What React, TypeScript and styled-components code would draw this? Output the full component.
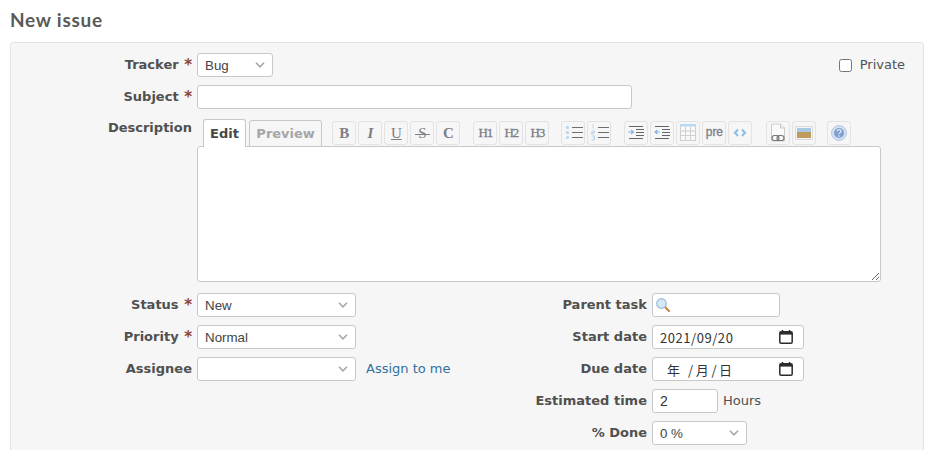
import { ReactNode } from 'react';
import styled, { createGlobalStyle } from 'styled-components';

const GlobalStyle = createGlobalStyle`
    html, body {
        margin: 0;
        padding: 0;
        background: #fff;
        overflow: hidden;
    }
    body {
        font-family: "DejaVu Sans", Verdana, sans-serif;
        font-size: 13px;
        color: #505050;
    }
`

const Page = styled.div`
    width: 930px;
    height: 450px;
    overflow: hidden;
`

const Title = styled.h2`
    margin: 0;
    padding: 9px 0 0 10px;
    height: 42px;
    box-sizing: border-box;
    font-family: "Lato", sans-serif;
    font-size: 19px;
    line-height: 21px;
    font-weight: 700;
    letter-spacing: 0.75px;
    color: #5a5a5a;
`

const Panel = styled.div`
    margin: 0 6px 0 10px;
    padding: 10px 18px 20px 0;
    background: #f6f6f6;
    border: 1px solid #e4e4e4;
    border-radius: 3px;
    display: flex;
    flex-direction: column;
    gap: 8px;
`

const Row = styled.div`
    display: flex;
    align-items: center;
    height: 24px;
`

const Label = styled.label<{ $width: number }>`
    width: ${p => p.$width}px;
    margin-right: 5px;
    flex: none;
    text-align: right;
    font-weight: 700;
    font-size: 13px;
    line-height: 16px;
    white-space: nowrap;
`

const Required = styled.span`
    color: #8a4435;
    font-size: 15px;
    line-height: 10px;
    margin-left: 1px;
    vertical-align: -1px;
`

const inputBox = `
    box-sizing: border-box;
    height: 24px;
    border: 1px solid #c8c8c8;
    border-radius: 3px;
    background: #fff;
    outline: none;
`

const TextInput = styled.input<{ $width: number }>`
    ${inputBox}
    width: ${p => p.$width}px;
    padding: 0 7px;
    font-family: "Liberation Sans", Arial, sans-serif;
    font-size: 14px;
    color: #333;
`

const SelectWrap = styled.div<{ $width: number }>`
    position: relative;
    width: ${p => p.$width}px;
    height: 24px;
    flex: none;
    svg {
        position: absolute;
        right: 8px;
        top: 9px;
        pointer-events: none;
    }
`

const Select = styled.select`
    ${inputBox}
    appearance: none;
    width: 100%;
    padding: 0 7px;
    font-family: "Liberation Sans", Arial, sans-serif;
    font-size: 13.33px;
    color: #444;
`

const Spread = styled.div`
    flex: 1;
`

const CheckLabel = styled.label`
    display: flex;
    align-items: center;
    gap: 8px;
    line-height: 14px;
    padding-bottom: 1px;
    input {
        margin: 1px 0 0;
        width: 13px;
        height: 13px;
    }
`

const DescriptionRow = styled.div`
    display: flex;
    align-items: flex-start;
    padding-top: 3px;
`

const DescriptionLabel = styled(Label)`
    padding: 0;
    line-height: 16px;
`

const Editor = styled.div`
    width: 684px;
    display: flex;
    flex-direction: column;
`

const EditorHead = styled.div`
    display: flex;
    align-items: flex-end;
    height: 27px;
    padding-left: 6px;
    position: relative;
    z-index: 1;
    margin-bottom: -1px;
`

const Tab = styled.div<{ $active?: boolean }>`
    box-sizing: border-box;
    height: ${p => (p.$active ? 28 : 27)}px;
    padding: 0 ${p => (p.$active ? 6 : 6.5)}px;
    margin-right: 3px;
    display: flex;
    align-items: center;
    font-weight: 700;
    font-size: 13px;
    border: 1px solid #c8c8c8;
    border-bottom: ${p => (p.$active ? '0' : '1px solid #c8c8c8')};
    border-radius: 3px 3px 0 0;
    background: ${p => (p.$active ? '#fff' : '#f6f6f6')};
    color: ${p => (p.$active ? '#484848' : '#a6a6a6')};
`

const Toolbar = styled.div`
    display: flex;
    margin-left: 7px;
    height: 24px;
    align-self: flex-start;
    margin-top: 1px;
`

const ToolGroup = styled.div<{ $gap: number }>`
    display: flex;
    gap: 2px;
    margin-right: ${p => p.$gap}px;
`

const ToolButton = styled.div`
    box-sizing: border-box;
    width: 24px;
    height: 24px;
    display: flex;
    align-items: center;
    justify-content: center;
    border: 1px solid #e3e3e3;
    border-radius: 3px;
    background: #f6f6f6;
    color: #7d7d85;
    font-family: "Liberation Serif", serif;
    font-size: 15px;
    font-weight: 700;
`

const PreGlyph = styled.span`
    font-family: "Liberation Sans", sans-serif;
    font-size: 12px;
    font-weight: 400;
    -webkit-text-stroke: 0.3px #7d7d85;
    margin-top: -2px;
`

const HeadingGlyph = styled.span`
    font-size: 13px;
    letter-spacing: -1px;
    font-weight: 400;
    -webkit-text-stroke: 0.3px #7d7d85;
`

const Italic = styled.span`
    font-style: italic;
`

const Underline = styled.span`
    text-decoration: underline;
    font-weight: 400;
`

const Strike = styled.span`
    position: relative;
    font-weight: 400;
    &::after {
        content: '';
        position: absolute;
        left: -3px;
        right: -3px;
        top: 9px;
        height: 1px;
        background: #7d7d85;
    }
`

const Body = styled.textarea`
    box-sizing: border-box;
    width: 684px;
    height: 136px;
    display: block;
    border: 1px solid #c8c8c8;
    border-radius: 3px;
    background: #fff;
    outline: none;
    margin: 0;
`

const Attributes = styled.div`
    display: flex;
    padding-top: 3px;
`

const Column = styled.div<{ $width: number }>`
    width: ${p => p.$width}px;
    display: flex;
    flex-direction: column;
    gap: 8px;
`

const AssignLink = styled.a`
    margin-left: 10px;
    padding-bottom: 2px;
    color: #31709f;
    font-size: 13px;
`

const Unit = styled.span`
    margin-left: 5px;
    padding-bottom: 2px;
`

const DateField = styled.div`
    ${inputBox}
    width: 152px;
    padding: 0 10px 0 7px;
    display: flex;
    align-items: center;
    justify-content: space-between;
    font-family: "Noto Sans CJK JP", "Liberation Sans", sans-serif;
    font-size: 13px;
    letter-spacing: 0.55px;
    color: #333;
    white-space: pre;
`

const DateBlank = styled.span`
    padding-left: 7px;
    letter-spacing: 2.6px;
`

const SearchField = styled.div`
    position: relative;
    svg {
        position: absolute;
        left: 3px;
        top: 4px;
    }
`

const Chevron = () => (
    <svg width="10" height="6" viewBox="0 0 10 6">
        <path d="M1 .8l4 4 4-4" fill="none" stroke="#aaa6a2" strokeWidth="1.6" />
    </svg>
)

const DropDown = ({ width, value }: { width: number; value: string }) => (
    <SelectWrap $width={width}>
        <Select defaultValue={value}>
            <option>{value}</option>
        </Select>
        <Chevron />
    </SelectWrap>
)

const CalendarIcon = () => (
    <svg width="14" height="14" viewBox="0 0 14 14">
        <path d="M3.5 0v2M10.5 0v2" stroke="#2b2b30" strokeWidth="1.5" />
        <rect x=".8" y="1.8" width="12.4" height="11.4" rx="1.2" fill="none" stroke="#2b2b30" strokeWidth="1.5" />
        <rect x="1" y="2" width="12" height="2.6" fill="#2b2b30" />
    </svg>
)

const SearchIcon = () => (
    <svg width="16" height="16" viewBox="0 0 16 16">
        <path d="M9.5 9.5l4.5 4.5" stroke="#c98a3c" strokeWidth="2.2" strokeLinecap="round" />
        <circle cx="6.5" cy="6.5" r="4.8" fill="#d6e7f7" stroke="#9dbbd6" strokeWidth="1.2" />
    </svg>
)

const Lines = () => (
    <path d="M9 4.5h11M9 9.5h11M9 14.5h11" stroke="#6e6e6e" strokeWidth="1.1" />
)

const icons: Record<string, ReactNode> = {
    ul: (
        <>
            <Lines />
            <circle cx="4.5" cy="4.5" r="1.6" fill="#b9d6ee" />
            <circle cx="4.5" cy="9.5" r="1.6" fill="#b9d6ee" />
            <circle cx="4.5" cy="14.5" r="1.6" fill="#b9d6ee" />
        </>
    ),
    ol: (
        <>
            <Lines />
            <path d="M4 1.5v4M2.5 8h3v1.5h-3V11h3M2.5 13h3v4h-3M3.5 15h2" stroke="#b9d6ee" fill="none" />
        </>
    ),
    indent: (
        <>
            <path d="M3 3.5h14M10 6.5h8M10 9.5h8M10 12.5h8M3 15.5h14" stroke="#666" strokeWidth="1.1" />
            <path d="M2 9h5M5 7l2.5 2L5 11" stroke="#86b5de" fill="none" strokeWidth="1.2" />
        </>
    ),
    outdent: (
        <>
            <path d="M3 3.5h14M10 6.5h8M10 9.5h8M10 12.5h8M3 15.5h14" stroke="#666" strokeWidth="1.1" />
            <path d="M8 9H3M5.5 7L3 9l2.5 2" stroke="#86b5de" fill="none" strokeWidth="1.2" />
        </>
    ),
    table: (
        <>
            <rect x="2.5" y="1.5" width="15" height="16" fill="#f9f9f9" stroke="#cfcfcf" />
            <rect x="2" y="1" width="16" height="2.5" fill="#bcd8f1" />
            <path d="M7.5 4v13M12.5 4v13M3 8h14M3 12.5h14" stroke="#cfcfcf" />
        </>
    ),
    code: (
        <path d="M8 6.5L5 9.8l3 3.2M12 6.5l3 3.3-3 3.2" fill="none" stroke="#8fbce6" strokeWidth="2" />
    ),
    file: (
        <>
            <path d="M3.5 1h9l4 4v13h-13z" fill="#f9f9f9" stroke="#cccccc" />
            <path d="M12.5 1v4h4" fill="#ececec" stroke="#cccccc" />
            <rect x="4" y="12.5" width="7" height="5" rx="2.5" fill="none" stroke="#777" strokeWidth="1.2" />
            <rect x="9" y="12.5" width="7" height="5" rx="2.5" fill="none" stroke="#777" strokeWidth="1.2" />
        </>
    ),
    image: (
        <>
            <rect x="1.5" y="3.5" width="17" height="13" fill="#f4f4f4" stroke="#dcdcdc" />
            <rect x="3" y="5" width="14" height="4.5" fill="#a9c8e6" />
            <rect x="3" y="9" width="14" height="6" fill="#c09c5c" />
        </>
    ),
    help: (
        <>
            <circle cx="10" cy="10" r="7.5" fill="#d3e0f1" stroke="#b4c8e2" />
            <circle cx="10" cy="10" r="5" fill="#7f9fcf" />
            <path d="M8.2 8.2a1.8 1.8 0 1 1 2.8 1.6c-.7.4-1 .6-1 1.3" fill="none" stroke="#e6eef8" strokeWidth="1.2" />
            <circle cx="10" cy="13" r=".8" fill="#e6eef8" />
        </>
    ),
}

const Tool = ({ icon }: { icon: string }) => (
    <ToolButton>
        <svg width="20" height="20" viewBox="0 0 20 20">{icons[icon]}</svg>
    </ToolButton>
)

const App = () => {
    return (
        <Page>
            <GlobalStyle />
            <Title>New issue</Title>
            <Panel>
                <Row>
                    <Label $width={181}>Tracker <Required>*</Required></Label>
                    <DropDown width={76} value="Bug" />
                    <Spread />
                    <CheckLabel>
                        <input type="checkbox" />
                        Private
                    </CheckLabel>
                </Row>
                <Row>
                    <Label $width={181}>Subject <Required>*</Required></Label>
                    <TextInput $width={435} />
                </Row>
                <DescriptionRow>
                    <DescriptionLabel $width={181}>Description</DescriptionLabel>
                    <Editor>
                        <EditorHead>
                            <Tab $active>Edit</Tab>
                            <Tab>Preview</Tab>
                            <Toolbar>
                                <ToolGroup $gap={13}>
                                    <ToolButton>B</ToolButton>
                                    <ToolButton><Italic>I</Italic></ToolButton>
                                    <ToolButton><Underline>U</Underline></ToolButton>
                                    <ToolButton><Strike>S</Strike></ToolButton>
                                    <ToolButton>C</ToolButton>
                                </ToolGroup>
                                <ToolGroup $gap={12}>
                                    <ToolButton><HeadingGlyph>H1</HeadingGlyph></ToolButton>
                                    <ToolButton><HeadingGlyph>H2</HeadingGlyph></ToolButton>
                                    <ToolButton><HeadingGlyph>H3</HeadingGlyph></ToolButton>
                                </ToolGroup>
                                <ToolGroup $gap={13}>
                                    <Tool icon="ul" />
                                    <Tool icon="ol" />
                                </ToolGroup>
                                <ToolGroup $gap={14}>
                                    <Tool icon="indent" />
                                    <Tool icon="outdent" />
                                    <Tool icon="table" />
                                    <ToolButton><PreGlyph>pre</PreGlyph></ToolButton>
                                    <Tool icon="code" />
                                </ToolGroup>
                                <ToolGroup $gap={11}>
                                    <Tool icon="file" />
                                    <Tool icon="image" />
                                </ToolGroup>
                                <ToolGroup $gap={0}>
                                    <Tool icon="help" />
                                </ToolGroup>
                            </Toolbar>
                        </EditorHead>
                        <Body />
                    </Editor>
                </DescriptionRow>
                <Attributes>
                    <Column $width={456}>
                        <Row>
                            <Label $width={181}>Status <Required>*</Required></Label>
                            <DropDown width={159} value="New" />
                        </Row>
                        <Row>
                            <Label $width={181}>Priority <Required>*</Required></Label>
                            <DropDown width={159} value="Normal" />
                        </Row>
                        <Row>
                            <Label $width={181}>Assignee</Label>
                            <DropDown width={159} value="" />
                            <AssignLink>Assign to me</AssignLink>
                        </Row>
                    </Column>
                    <Column $width={440}>
                        <Row>
                            <Label $width={181}>Parent task</Label>
                            <SearchField>
                                <TextInput $width={128} />
                                <SearchIcon />
                            </SearchField>
                        </Row>
                        <Row>
                            <Label $width={181}>Start date</Label>
                            <DateField>2021/09/20<CalendarIcon /></DateField>
                        </Row>
                        <Row>
                            <Label $width={181}>Due date</Label>
                            <DateField><DateBlank>年 /月/日</DateBlank><CalendarIcon /></DateField>
                        </Row>
                        <Row>
                            <Label $width={181}>Estimated time</Label>
                            <TextInput $width={66} defaultValue="2" />
                            <Unit>Hours</Unit>
                        </Row>
                        <Row>
                            <Label $width={181}>% Done</Label>
                            <DropDown width={95} value="0 %" />
                        </Row>
                    </Column>
                </Attributes>
            </Panel>
        </Page>
    )
}

export default App
